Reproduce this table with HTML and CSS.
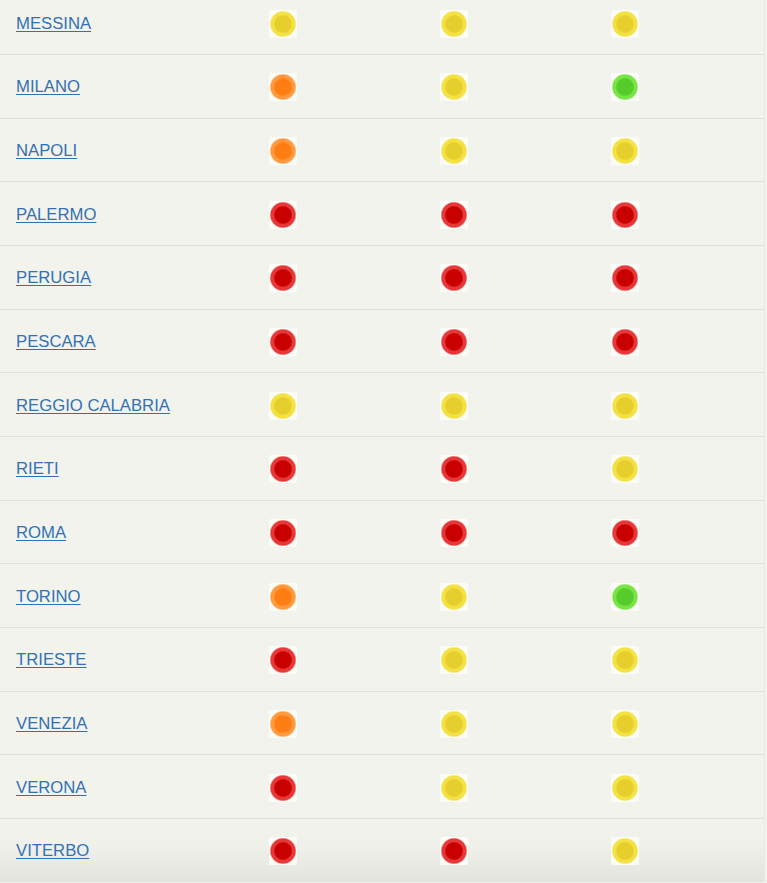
FILE: index.html
```html
<!DOCTYPE html>
<html lang="it">
<head>
<meta charset="utf-8">
<title>Città</title>
<link rel="stylesheet" href="styles.css">
</head>
<body>
<div class="table">
  <div class="row"><a class="city" href="#">MESSINA</a><span class="dot yellow"></span><span class="dot yellow"></span><span class="dot yellow"></span></div>
  <div class="row"><a class="city" href="#">MILANO</a><span class="dot orange"></span><span class="dot yellow"></span><span class="dot green"></span></div>
  <div class="row"><a class="city" href="#">NAPOLI</a><span class="dot orange"></span><span class="dot yellow"></span><span class="dot yellow"></span></div>
  <div class="row"><a class="city" href="#">PALERMO</a><span class="dot red"></span><span class="dot red"></span><span class="dot red"></span></div>
  <div class="row"><a class="city" href="#">PERUGIA</a><span class="dot red"></span><span class="dot red"></span><span class="dot red"></span></div>
  <div class="row"><a class="city" href="#">PESCARA</a><span class="dot red"></span><span class="dot red"></span><span class="dot red"></span></div>
  <div class="row"><a class="city" href="#">REGGIO CALABRIA</a><span class="dot yellow"></span><span class="dot yellow"></span><span class="dot yellow"></span></div>
  <div class="row"><a class="city" href="#">RIETI</a><span class="dot red"></span><span class="dot red"></span><span class="dot yellow"></span></div>
  <div class="row"><a class="city" href="#">ROMA</a><span class="dot red"></span><span class="dot red"></span><span class="dot red"></span></div>
  <div class="row"><a class="city" href="#">TORINO</a><span class="dot orange"></span><span class="dot yellow"></span><span class="dot green"></span></div>
  <div class="row"><a class="city" href="#">TRIESTE</a><span class="dot red"></span><span class="dot yellow"></span><span class="dot yellow"></span></div>
  <div class="row"><a class="city" href="#">VENEZIA</a><span class="dot orange"></span><span class="dot yellow"></span><span class="dot yellow"></span></div>
  <div class="row"><a class="city" href="#">VERONA</a><span class="dot red"></span><span class="dot yellow"></span><span class="dot yellow"></span></div>
  <div class="row last"><a class="city" href="#">VITERBO</a><span class="dot red"></span><span class="dot red"></span><span class="dot yellow"></span></div>
</div>
</body>
</html>
```

FILE: styles.css
```css
html, body {
  margin: 0;
  padding: 0;
  background: #f3f3ee;
  overflow: hidden;
}
body {
  font-family: "Liberation Sans", Arial, Helvetica, sans-serif;
}
.table {
  width: 764px;
  margin-top: -8.6px;
  border-right: 1px solid #ebebe6;
}
.row {
  display: grid;
  grid-template-columns: 197.5px 171px 171px 171px 1fr;
  align-items: center;
  height: 62.67px;
  border-bottom: 1px solid #e0e0db;
}
.row.last {
  border-bottom: none;
  background: linear-gradient(to bottom, #f3f3ee 0%, #f1f1ec 40%, #e4e4df 100%);
}
.city {
  padding-left: 16px;
  padding-top: 2px;
  font-size: 16.7px;
  color: #3271b4;
  text-decoration: underline;
  text-decoration-thickness: 1px;
  text-underline-offset: 2px;
  justify-self: start;
}
.dot {
  justify-self: center;
  width: 28px;
  height: 28px;
  margin-top: 2px;
}
.yellow { background: radial-gradient(circle, #e6cf2c 0 8px, #f4e244 9.5px 12px, #fdfdf9 13.5px, #f8f8f4 20px); }
.orange { background: radial-gradient(circle, #ff7e14 0 8px, #ff9a3e 9.5px 12px, #fdfdf9 13.5px, #f8f8f4 20px); }
.green  { background: radial-gradient(circle, #56cc2a 0 8px, #78e546 9.5px 12px, #fdfdf9 13.5px, #f8f8f4 20px); }
.red    { background: radial-gradient(circle, #c80000 0 8px, #e63838 9.5px 12px, #fdfdf9 13.5px, #f8f8f4 20px); }
```
